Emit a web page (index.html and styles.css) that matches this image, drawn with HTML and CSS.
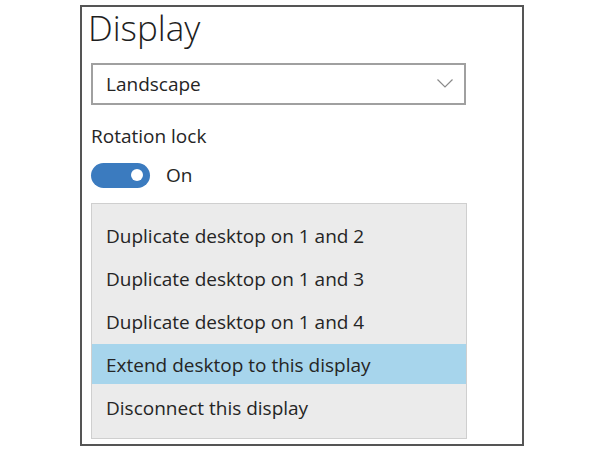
FILE: index.html
```html
<!DOCTYPE html>
<html>
<head>
<meta charset="utf-8">
<link rel="stylesheet" href="styles.css">
</head>
<body>
<div class="frame">
  <h1 class="title">Display</h1>
  <div class="select">
    <span class="select-value">Landscape</span>
    <svg class="chevron" width="16" height="9" viewBox="0 0 16 9"><path d="M0.5 0.5 L8 8 L15.5 0.5" fill="none" stroke="#8a8a8a" stroke-width="1.2"/></svg>
  </div>
  <div class="label">Rotation lock</div>
  <div class="toggle-row">
    <span class="toggle"><span class="knob"></span></span>
    <span class="toggle-text">On</span>
  </div>
  <ul class="menu">
    <li class="item">Duplicate desktop on 1 and 2</li>
    <li class="item">Duplicate desktop on 1 and 3</li>
    <li class="item">Duplicate desktop on 1 and 4</li>
    <li class="item selected">Extend desktop to this display</li>
    <li class="item">Disconnect this display</li>
  </ul>
</div>
</body>
</html>
```
FILE: styles.css
```css
* { box-sizing: border-box; }
html, body { margin: 0; padding: 0; background: #fff; }
body {
  font-family: "Open Sans", "Noto Sans", sans-serif;
  color: #252525;
  padding-top: 5px;
}
.frame {
  margin-left: 80px;
  width: 444px;
  height: 441px;
  border: 2px solid #555;
  padding: 0 0 0 9px;
}
.title {
  margin: 0 0 0 -3px;
  font-weight: 300;
  font-size: 35px;
  line-height: 40px;
  height: 40px;
  padding-top: 1px;
  color: #1e1e1e;
}
.select {
  margin-top: 16px;
  width: 375px;
  height: 42px;
  border: 2px solid #a0a0a0;
  display: flex;
  align-items: center;
  justify-content: space-between;
  padding: 0 11px 0 13px;
}
.select-value { font-size: 19px; }
.chevron { display: block; margin-top: -1px; }
.label {
  margin-top: 19px;
  font-size: 19px;
  line-height: 24px;
}
.toggle-row {
  margin-top: 14px;
  display: flex;
  align-items: center;
  height: 26px;
}
.toggle {
  width: 59px;
  height: 25px;
  border-radius: 13px;
  background: #3b7bbf;
  display: flex;
  align-items: center;
  justify-content: flex-end;
  padding-right: 7px;
}
.knob {
  width: 12px;
  height: 12px;
  border-radius: 50%;
  background: #fff;
}
.toggle-text {
  margin-left: 16px;
  font-size: 19px;
}
.menu {
  list-style: none;
  margin: 15px 0 0 0;
  padding: 11px 0;
  width: 376px;
  background: #ebebeb;
  border: 1px solid #cfcfcf;
  display: flex;
  flex-direction: column;
  gap: 3px;
}
.item {
  height: 40px;
  display: flex;
  align-items: center;
  padding: 2px 0 0 14px;
  font-size: 19px;
}
.item.selected { background: #a7d5ec; }
```
